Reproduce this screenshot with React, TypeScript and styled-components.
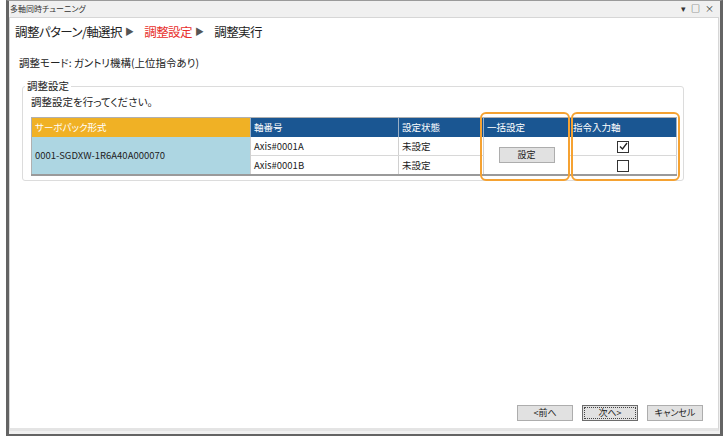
import React from 'react';
import styled, { createGlobalStyle } from 'styled-components';

const GlobalStyle = createGlobalStyle`
  html, body {
    margin: 0;
    padding: 0;
    background: #ffffff;
  }
  body {
    font-family: "Noto Sans CJK JP", "Noto Sans", sans-serif;
    font-feature-settings: "palt";
    color: #222;
  }
`;

const Window = styled.div`
  margin-left: 6px;
  width: 717px;
  height: 436px;
  box-sizing: border-box;
  display: flex;
  flex-direction: column;
  background: #f0f0f0;
  border-top: 1px solid #9a9a9a;
  border-left: 3px solid #646464;
  border-right: 3px solid #646464;
  border-bottom: 2px solid #646464;
`;

const TitleBar = styled.div`
  height: 16px;
  display: flex;
  align-items: center;
  justify-content: space-between;
  padding: 0 6px 0 1px;
  font-size: 8px;
  line-height: 16px;
  color: #333;
`;

const Controls = styled.div`
  display: flex;
  gap: 5px;
  font-size: 9px;
  color: #333;
`;

const Content = styled.div`
  flex: 1;
  display: flex;
  flex-direction: column;
  margin: 0 1px 3px 0;
  background: #ffffff;
  border: 1px solid #d6d6d6;
  border-bottom: 3px solid #e4e4e4;
`;

const Breadcrumb = styled.div`
  display: flex;
  align-items: center;
  padding: 5px 0 0 5px;
  height: 18px;
  font-size: 12.5px;
  line-height: 18px;
  letter-spacing: -0.6px;
  color: #222;
`;

const Step = styled.span<{ $active?: boolean }>`
  color: ${p => (p.$active ? '#e8302c' : '#222')};
`;

const Arrow = styled.span`
  font-size: 9px;
  color: #555;
  margin: 0 11px 0 3px;
`;

const ModeLine = styled.div`
  margin: 14px 0 0 9px;
  font-size: 10.5px;
  line-height: 16px;
`;

const Group = styled.fieldset`
  margin: 8px 0 0 12px;
  width: 659px;
  box-sizing: border-box;
  padding: 0 6px 4px 8px;
  border: 1px solid #dcdcdc;
  border-radius: 3px;
`;

const Legend = styled.legend`
  margin-left: -6px;
  padding: 0 2px;
  font-size: 10.5px;
  line-height: 14px;
`;

const Hint = styled.div`
  margin-top: 2px;
  font-size: 10.5px;
  line-height: 14px;
`;

const TableWrap = styled.div`
  position: relative;
  margin-top: 8px;
`;

const Table = styled.table`
  border-collapse: collapse;
  width: 645px;
  table-layout: fixed;
  font-size: 9.5px;
  border-left: 1px solid #b0b0b0;
  border-right: 1px solid #b0b0b0;
  border-bottom: 2px solid #9a9a9a;
`;

const Th = styled.th<{ $accent?: boolean }>`
  height: 19px;
  padding: 0 0 0 3px;
  text-align: left;
  font-weight: normal;
  color: #ffffff;
  background: ${p => (p.$accent ? '#f0b125' : '#1a5692')};
  border-right: 1px solid #9bb0c6;
  border-top: 1px solid #b0b0b0;
  box-sizing: border-box;
`;

const Td = styled.td<{ $tone?: 'blue' | 'plain' }>`
  height: 18px;
  padding: 0 0 0 3px;
  background: ${p => (p.$tone === 'blue' ? '#add6e2' : '#ffffff')};
  border-right: 1px solid #d0d0d0;
  border-bottom: 1px solid #d8d8d8;
  color: #222;
`;

const CenterTd = styled(Td)`
  padding: 0;
  text-align: center;
`;

const SmallButton = styled.button<{ $focused?: boolean }>`
  width: 56px;
  height: 16px;
  padding: 0;
  font-family: inherit;
  font-feature-settings: "palt";
  font-size: 9px;
  line-height: 14px;
  color: #222;
  background: #e1e1e1;
  border: 1px solid ${p => (p.$focused ? '#6d6d6d' : '#adadad')};
  outline: ${p => (p.$focused ? '1px dotted #444' : 'none')};
  outline-offset: -3px;
`;

const Box = styled.span`
  display: inline-flex;
  align-items: center;
  justify-content: center;
  width: 10px;
  height: 10px;
  border: 1px solid #333;
  background: #fff;
  vertical-align: middle;
`;

const Highlight = styled.div<{ $left: number; $width: number }>`
  position: absolute;
  top: -5px;
  left: ${p => p.$left}px;
  width: ${p => p.$width}px;
  height: 69px;
  box-sizing: border-box;
  border: 2px solid #f5a232;
  border-radius: 6px;
  pointer-events: none;
`;

const Spacer = styled.div`
  flex: 1;
`;

const Footer = styled.div`
  display: flex;
  justify-content: flex-end;
  gap: 9px;
  padding: 0 15px 7px 0;
`;

const Check: React.FC<{ checked?: boolean }> = ({ checked }) => (
  <Box>
    {checked && (
      <svg width="9" height="9" viewBox="0 0 9 9">
        <path d="M1 4.5 L3.5 7 L8 1" fill="none" stroke="#222" strokeWidth="1.3" />
      </svg>
    )}
  </Box>
);

const App: React.FC = () => {
  return (
    <>
      <GlobalStyle />
      <Window>
        <TitleBar>
          <span>多軸同時チューニング</span>
          <Controls>
            <span>▾</span>
            <span>□</span>
            <span>×</span>
          </Controls>
        </TitleBar>
        <Content>
          <Breadcrumb>
            <Step>調整パターン/軸選択</Step>
            <Arrow>▶</Arrow>
            <Step $active>調整設定</Step>
            <Arrow>▶</Arrow>
            <Step>調整実行</Step>
          </Breadcrumb>
          <ModeLine>調整モード: ガントリ機構(上位指令あり)</ModeLine>
          <Group>
            <Legend>調整設定</Legend>
            <Hint>調整設定を行ってください。</Hint>
            <TableWrap>
              <Table>
                <colgroup>
                  <col style={{ width: 219 }} />
                  <col style={{ width: 148 }} />
                  <col style={{ width: 85 }} />
                  <col style={{ width: 86 }} />
                  <col style={{ width: 107 }} />
                </colgroup>
                <thead>
                  <tr>
                    <Th $accent>サーボパック形式</Th>
                    <Th>軸番号</Th>
                    <Th>設定状態</Th>
                    <Th>一括設定</Th>
                    <Th>指令入力軸</Th>
                  </tr>
                </thead>
                <tbody>
                  <tr>
                    <Td $tone="blue" rowSpan={2}>0001-SGDXW-1R6A40A000070</Td>
                    <Td>Axis#0001A</Td>
                    <Td>未設定</Td>
                    <CenterTd rowSpan={2}>
                      <SmallButton>設定</SmallButton>
                    </CenterTd>
                    <CenterTd>
                      <Check checked />
                    </CenterTd>
                  </tr>
                  <tr>
                    <Td>Axis#0001B</Td>
                    <Td>未設定</Td>
                    <CenterTd>
                      <Check />
                    </CenterTd>
                  </tr>
                </tbody>
              </Table>
              <Highlight $left={449} $width={90} />
              <Highlight $left={540} $width={109} />
            </TableWrap>
          </Group>
          <Spacer />
          <Footer>
            <SmallButton>&lt;前へ</SmallButton>
            <SmallButton $focused>次へ&gt;</SmallButton>
            <SmallButton>キャンセル</SmallButton>
          </Footer>
        </Content>
      </Window>
    </>
  );
};

export default App;
